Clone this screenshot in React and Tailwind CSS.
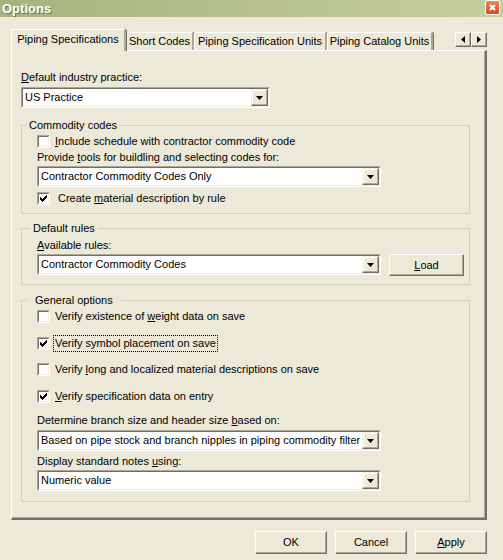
import React from 'react';

const font = "font-['Liberation_Sans',Arial,sans-serif]";

const U = ({ children }) => <span className="underline underline-offset-[1px]">{children}</span>;

const DropBtn = () => (
  <div className="w-[17px] h-[17px] flex items-center justify-center bg-[#ece9d8] border border-t-[#f1efe2] border-l-[#f1efe2] border-r-[#716f64] border-b-[#716f64] shadow-[inset_-1px_-1px_0_#aca899,inset_1px_1px_0_#ffffff]">
    <svg width="7" height="4" viewBox="0 0 7 4">
      <path d="M0 0h7L3.5 4z" fill="#000" />
    </svg>
  </div>
);

const Combo = ({ value, className }) => (
  <div className={`h-[21px] flex border border-t-[#aca899] border-l-[#aca899] border-r-white border-b-white ${className}`}>
    <div className="flex-1 flex border border-t-[#716f64] border-l-[#716f64] border-r-[#f1efe2] border-b-[#f1efe2] bg-white min-w-0">
      <div className="flex-1 pl-[2px] leading-[17px] whitespace-nowrap overflow-hidden">{value}</div>
      <DropBtn />
    </div>
  </div>
);

const CheckBox = ({ checked }) => (
  <div className="w-[13px] h-[13px] shrink-0 border border-t-[#aca899] border-l-[#aca899] border-r-white border-b-white">
    <div className="w-full h-full bg-white border border-t-[#716f64] border-l-[#716f64] border-r-[#f1efe2] border-b-[#f1efe2] flex items-center justify-center">
      {checked && (
        <svg width="7" height="7" viewBox="0 0 7 7">
          <path d="M0 2h1v1h1v1h1v-1h1v-1h1v-1h1v-1h1v3h-1v1h-1v1h-1v1h-1v1h-1v-1h-1v-1h-1v-1h-1z" fill="#000" />
        </svg>
      )}
    </div>
  </div>
);

const Button = ({ children, className }) => (
  <div className={`flex items-center justify-center bg-[#ece9d8] border border-t-white border-l-white border-r-[#716f64] border-b-[#716f64] shadow-[inset_-1px_-1px_0_#aca899] ${className}`}>
    {children}
  </div>
);

const Tab = ({ label, selected, className }) => (
  <div
    className={`flex items-center justify-center whitespace-nowrap rounded-t-[2px] bg-[#ece9d8] border-t border-l border-t-white border-l-white border-r-2 border-r-[#aca899] shadow-[1px_0_0_#716f64] ${
      selected ? 'h-[22px] -mb-px relative z-10 pb-[2px]' : 'h-[18px]'
    } ${className}`}
  >
    {label}
  </div>
);

const ArrowBtn = ({ dir }) => (
  <div className="w-[16px] h-[15px] flex items-center justify-center bg-[#ece9d8] border border-t-white border-l-white border-r-[#716f64] border-b-[#716f64] shadow-[inset_-1px_-1px_0_#aca899]">
    <svg width="4" height="7" viewBox="0 0 4 7">
      {dir === 'left' ? <path d="M4 0v7L0 3.5z" fill="#000" /> : <path d="M0 0v7l4-3.5z" fill="#000" />}
    </svg>
  </div>
);

const CheckRow = ({ checked, children, gap = 'ml-[5px]', focused }) => (
  <div className="flex items-center h-[13px]">
    <CheckBox checked={checked} />
    <span className={`${gap} leading-[13px] whitespace-nowrap ${focused ? 'outline outline-1 outline-dotted outline-black outline-offset-[1px]' : ''}`}>
      {children}
    </span>
  </div>
);

const App = () => {
  return (
    <div className={`w-[503px] h-[560px] bg-[#ece9d8] text-[11px] text-black ${font} flex flex-col overflow-hidden`}>
      {/* Title bar */}
      <div className="h-[17px] flex items-center justify-between bg-gradient-to-r from-[#a6b37d] to-[#c6cfa1] pl-[2px] pr-[3px]">
        <span className="text-white font-bold text-[13px] leading-[15px] [text-shadow:1px_1px_0_#6a7a48]">Options</span>
        <div className="w-[15px] h-[15px] -mt-[2px] rounded-[2px] border border-white bg-gradient-to-b from-[#e98a5d] to-[#cf4a21] flex items-center justify-center">
          <svg width="7" height="7" viewBox="0 0 7 7">
            <path d="M1 1l5 5M6 1l-5 5" stroke="#fff" strokeWidth="1.8" />
          </svg>
        </div>
      </div>

      {/* Tabs */}
      <div className="mt-[12px] ml-[11px] w-[476px] flex items-end">
        <Tab label="Piping Specifications" selected className="w-[115px]" />
        <Tab label="Short Codes" className="w-[68px]" />
        <Tab label="Piping Specification Units" className="w-[133px]" />
        <Tab label="Piping Catalog Units" className="w-[106px]" />
        <div className="ml-auto self-start mt-[3px] flex">
          <ArrowBtn dir="left" />
          <ArrowBtn dir="right" />
        </div>
      </div>

      {/* Panel */}
      <div className="ml-[11px] w-[476px] h-[470px] border-t border-l border-t-white border-l-white border-r-2 border-b-2 border-r-[#716f64] border-b-[#716f64] shadow-[inset_-1px_-1px_0_#aca899] pt-[20px] pl-[9px]">
        <div className="leading-[13px]">
          <U>D</U>efault industry practice:
        </div>
        <Combo value="US Practice" className="mt-[3px] w-[249px]" />

        {/* Commodity codes */}
        <fieldset className="mt-[11px] w-[449px] border border-[#d0d0bf] px-0 pb-[8px]">
          <legend className="ml-[5px] px-[2px] leading-[13px]">Commodity codes</legend>
          <div className="pl-[15px]">
            <div className="mt-[3px]">
              <CheckRow>
                <U>I</U>nclude schedule with contractor commodity code
              </CheckRow>
            </div>
            <div className="mt-[3px] leading-[13px]">
              Provide <U>t</U>ools for buildling and selecting codes for:
            </div>
            <Combo value="Contractor Commodity Codes Only" className="mt-[2px] w-[344px]" />
            <div className="mt-[5px]">
              <CheckRow checked gap="ml-[8px]">
                Create <U>m</U>aterial description by rule
              </CheckRow>
            </div>
          </div>
        </fieldset>

        {/* Default rules */}
        <fieldset className="mt-[8px] w-[449px] border border-[#d0d0bf] px-0 pb-[8px]">
          <legend className="ml-[8px] px-[3px] leading-[13px]">Default rules</legend>
          <div className="pl-[15px]">
            <div className="mt-[4px] leading-[13px]">
              <U>A</U>vailable rules:
            </div>
            <div className="mt-[2px] flex items-start gap-[8px]">
              <Combo value="Contractor Commodity Codes" className="w-[344px]" />
              <Button className="w-[75px] h-[22px]">
                <U>L</U>oad
              </Button>
            </div>
          </div>
        </fieldset>

        {/* General options */}
        <fieldset className="mt-[9px] w-[449px] border border-[#d0d0bf] px-0 pb-[10px]">
          <legend className="ml-[5px] px-[8px] leading-[13px]">General options</legend>
          <div className="pl-[15px]">
            <div className="mt-[3px]">
              <CheckRow>
                Verify existence of <U>w</U>eight data on save
              </CheckRow>
            </div>
            <div className="mt-[14px]">
              <CheckRow checked focused>
                Verify symbol placement on save
              </CheckRow>
            </div>
            <div className="mt-[13px]">
              <CheckRow>
                Verify <U>l</U>ong and localized material descriptions on save
              </CheckRow>
            </div>
            <div className="mt-[14px]">
              <CheckRow checked>
                <U>V</U>erify specification data on entry
              </CheckRow>
            </div>
            <div className="mt-[11px] leading-[13px]">
              Determine branch size and header size <U>b</U>ased on:
            </div>
            <Combo value="Based on pipe stock and branch nipples in piping commodity filter" className="mt-[3px] w-[344px]" />
            <div className="mt-[4px] leading-[13px]">
              Display standard notes <U>u</U>sing:
            </div>
            <Combo value="Numeric value" className="mt-[2px] w-[344px]" />
          </div>
        </fieldset>
      </div>

      {/* Bottom buttons */}
      <div className="mt-[11px] flex justify-end gap-[8px] pr-[16px]">
        <Button className="w-[72px] h-[23px]">OK</Button>
        <Button className="w-[72px] h-[23px]">Cancel</Button>
        <Button className="w-[72px] h-[23px]">
          <U>A</U>pply
        </Button>
      </div>
    </div>
  );
};

export default App;
